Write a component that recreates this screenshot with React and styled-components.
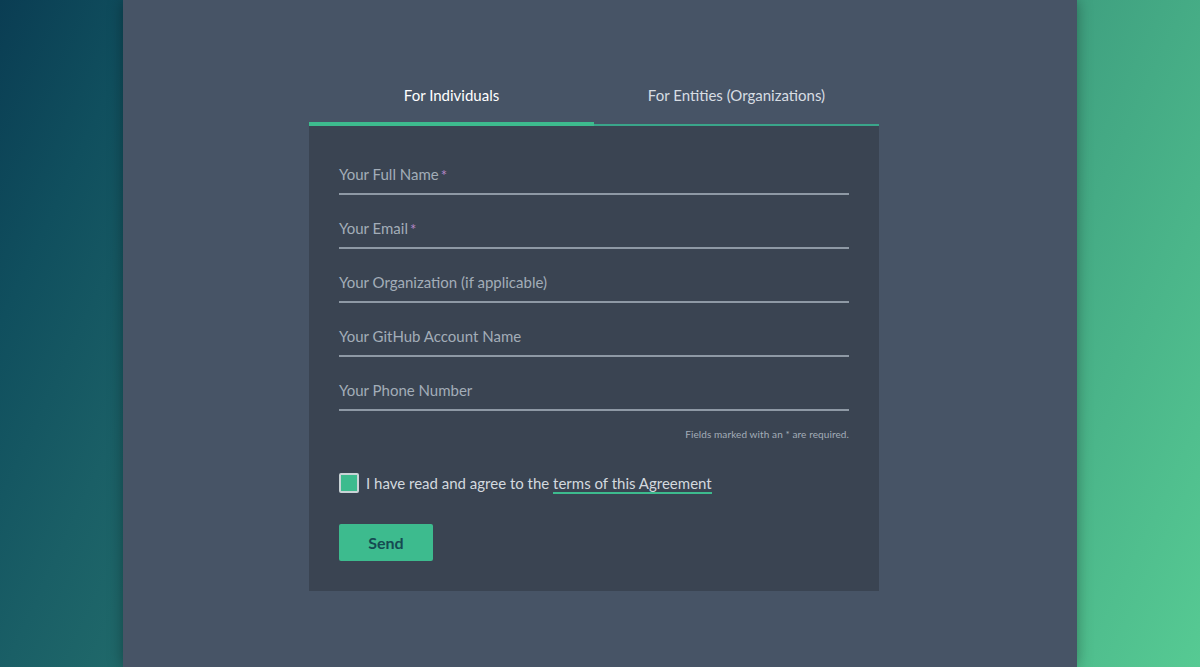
import React, { useState } from "react";
import styled, { createGlobalStyle } from "styled-components";

const GlobalStyle = createGlobalStyle`
  html, body {
    margin: 0;
    padding: 0;
  }
  body {
    font-family: Lato, "Open Sans", sans-serif;
  }
`;

const Page = styled.div`
  width: 100%;
  height: 667px;
  background: linear-gradient(
    115deg,
    #0a3d53 0%,
    #104f5e 10%,
    #1a5f66 21%,
    #3fa080 71%,
    #56ca93 100%
  );
  display: flex;
  justify-content: center;
  overflow: hidden;
`;

const Panel = styled.div`
  width: 954px;
  height: 100%;
  background-color: #475466;
  box-shadow: 0 0 14px rgba(0, 0, 0, 0.35);
  display: flex;
  justify-content: center;
  padding: 70px 12px 0 0;
  box-sizing: border-box;
`;

const FormBox = styled.div`
  width: 570px;
  display: flex;
  flex-direction: column;
`;

const Tabs = styled.div`
  display: flex;
  height: 56px;
`;

const Tab = styled.button`
  flex: 1;
  height: 56px;
  background: none;
  border: none;
  border-bottom: ${(p) => (p.active ? "4px solid #3dbb8e" : "2px solid #3aa58a")};
  color: ${(p) => (p.active ? "#ffffff" : "#d7dde3")};
  font-family: Lato, sans-serif;
  font-weight: 400;
  font-size: 15px;
  line-height: 18px;
  padding: 16px 0 0;
  display: flex;
  justify-content: center;
  align-items: flex-start;
  cursor: pointer;
  box-sizing: border-box;
`;

const Card = styled.div`
  background-color: #3a4452;
  padding: 30px 30px 30px;
  display: flex;
  flex-direction: column;
`;

const Field = styled.label`
  display: flex;
  align-items: flex-end;
  height: 54px;
  border-bottom: 2px solid #8e99a5;
  padding-bottom: 10px;
  box-sizing: border-box;
  margin-top: ${(p) => (p.first ? "-15px" : "0")};
  color: #a3adb8;
  font-size: 15px;
`;

const Star = styled.span`
  color: #b487c6;
  margin-left: 2px;
  font-size: 15px;
  position: relative;
  top: 1px;
`;

const Note = styled.div`
  text-align: right;
  font-size: 10px;
  letter-spacing: 0.1px;
  color: #a3adb8;
  margin-top: 17px;
`;

const AgreeRow = styled.label`
  display: flex;
  align-items: center;
  margin-top: 33px;
  color: #d3d9df;
  font-size: 15px;
  gap: 7px;
  cursor: pointer;
`;

const Box = styled.span`
  width: 16px;
  height: 16px;
  border: 2px solid #c9d3d6;
  border-radius: 2px;
  background-color: ${(p) => (p.checked ? "#3dbb8e" : "transparent")};
  flex-shrink: 0;
`;

const Link = styled.a`
  color: #d3d9df;
  text-decoration: none;
  border-bottom: 2px solid #3dbb8e;
  line-height: 16px;
`;

const SendButton = styled.button`
  margin-top: 31px;
  width: 94px;
  height: 37px;
  background-color: #3dbb8e;
  border: none;
  border-radius: 2px;
  color: #154a52;
  font-family: Lato, sans-serif;
  font-weight: 700;
  font-size: 16px;
  cursor: pointer;
`;

const fields = [
  { label: "Your Full Name", required: true },
  { label: "Your Email", required: true },
  { label: "Your Organization (if applicable)" },
  { label: "Your GitHub Account Name" },
  { label: "Your Phone Number" },
];

export default function App() {
  const [tab, setTab] = useState(0);
  const [agreed, setAgreed] = useState(true);

  return (
    <Page>
      <GlobalStyle />
      <Panel>
        <FormBox>
          <Tabs>
            <Tab active={tab === 0} onClick={() => setTab(0)}>
              For Individuals
            </Tab>
            <Tab active={tab === 1} onClick={() => setTab(1)}>
              For Entities (Organizations)
            </Tab>
          </Tabs>
          <Card>
            {fields.map((f, i) => (
              <Field key={f.label} first={i === 0}>
                {f.label}
                {f.required && <Star>*</Star>}
              </Field>
            ))}
            <Note>Fields marked with an * are required.</Note>
            <AgreeRow onClick={() => setAgreed(!agreed)}>
              <Box checked={agreed} />
              <span>
                I have read and agree to the <Link href="#">terms of this Agreement</Link>
              </span>
            </AgreeRow>
            <div>
              <SendButton>Send</SendButton>
            </div>
          </Card>
        </FormBox>
      </Panel>
    </Page>
  );
}
